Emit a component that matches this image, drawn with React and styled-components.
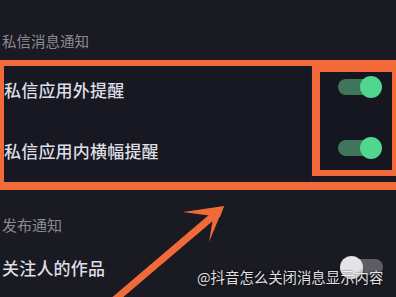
import { createGlobalStyle, styled } from 'styled-components'

const orange = '#f36a3a'

const Global = createGlobalStyle`
  html, body {
    margin: 0;
    padding: 0;
    background: #1a1a23;
  }
  body {
    font-family: "Noto Sans CJK SC", "Noto Sans", sans-serif;
    overflow: hidden;
  }
`

const Page = styled.div`
  position: relative;
  width: 396px;
  height: 297px;
  background: #1a1a23;
  overflow: hidden;
`

const SectionTitle = styled.div`
  height: ${({ $h }) => $h}px;
  display: flex;
  align-items: flex-end;
  padding-left: 2px;
  padding-bottom: ${({ $pb }) => $pb}px;
  box-sizing: border-box;
  color: #8b8a94;
  font-size: ${({ $size }) => $size}px;
  line-height: 1;
`

const Frame = styled.div`
  display: flex;
  width: 396px;
  height: 130px;
  box-sizing: border-box;
  border-top: 6px solid ${orange};
  border-left: 4px solid ${orange};
  border-bottom: 8px solid ${orange};
  background: #181822;
`

const LeftCol = styled.div`
  width: 308px;
  display: flex;
  flex-direction: column;
  gap: 15px;
  border-right: 1px solid #1d1b35;
`

const Row = styled.div`
  height: ${({ $h }) => $h || 46}px;
  display: flex;
  align-items: center;
  justify-content: space-between;
  padding-left: ${({ $pl }) => $pl || 0}px;
  color: #dedee3;
  font-size: 17px;
  font-weight: 500;
  letter-spacing: 0.2px;
`

const SwitchBox = styled.div`
  width: 84px;
  height: 110px;
  box-sizing: border-box;
  border-left: 8px solid ${orange};
  border-top: 6px solid ${orange};
  border-bottom: 6px solid ${orange};
  border-right: 4px solid ${orange};
  background: #15161f;
  display: flex;
  flex-direction: column;
  gap: 39px;
  padding: 4px 0 0 18px;
`

const Toggle = styled.div`
  position: relative;
  width: ${({ $w }) => $w}px;
  height: ${({ $d }) => $d}px;
`

const Track = styled.div`
  position: absolute;
  top: 50%;
  transform: translateY(-50%);
  left: ${({ $l }) => $l}px;
  right: ${({ $r }) => $r}px;
  height: 16px;
  border-radius: 8px;
  background: ${({ $on }) => ($on ? '#3f7659' : '#5d5d64')};
  filter: blur(0.7px);
`

const Knob = styled.div`
  position: absolute;
  top: 0;
  ${({ $on }) => ($on ? 'right: 0;' : 'left: 0;')}
  width: ${({ $d }) => $d}px;
  height: ${({ $d }) => $d}px;
  border-radius: 50%;
  background: ${({ $on }) => ($on ? '#50d68f' : '#e4e4e8')};
  filter: blur(0.6px);
`

const Switch = ({ on, w = 44, d = 22 }) => (
  <Toggle $w={w} $d={d}>
    <Track $on={on} $l={on ? 0 : 5} $r={on ? 4 : 0} />
    <Knob $on={on} $d={d} />
  </Toggle>
)

const Arrow = styled.svg`
  position: absolute;
  left: 0;
  top: 0;
  pointer-events: none;
`

const Watermark = styled.div`
  position: absolute;
  left: 197px;
  top: 268px;
  color: rgba(255, 255, 255, 0.88);
  font-size: 14.4px;
  line-height: 18px;
  white-space: nowrap;
  text-shadow: 0 0 2px rgba(0, 0, 0, 0.8);
`

export default function App() {
  return (
    <>
      <Global />
      <Page>
        <SectionTitle $h={60} $pb={12} $size={14.5}>
          私信消息通知
        </SectionTitle>
        <Frame>
          <LeftCol>
            <Row>私信应用外提醒</Row>
            <Row>私信应用内横幅提醒</Row>
          </LeftCol>
          <SwitchBox>
            <Switch on />
            <Switch on />
          </SwitchBox>
        </Frame>
        <SectionTitle $h={48} $pb={6} $size={15}>
          发布通知
        </SectionTitle>
        <Row $h={58} $pl={2}>
          关注人的作品
          <span style={{ marginRight: 13 }}>
            <Switch w={43} d={23} />
          </span>
        </Row>
        <Arrow width="396" height="297" viewBox="0 0 396 297">
          <line x1="112" y1="302" x2="219" y2="211" stroke={orange} strokeWidth="7" />
          <polygon points="183,212 224,206 220,217" fill={orange} />
          <polygon points="224,206 209,242 214,212" fill={orange} />
        </Arrow>
        <Watermark>@抖音怎么关闭消息显示内容</Watermark>
      </Page>
    </>
  )
}
